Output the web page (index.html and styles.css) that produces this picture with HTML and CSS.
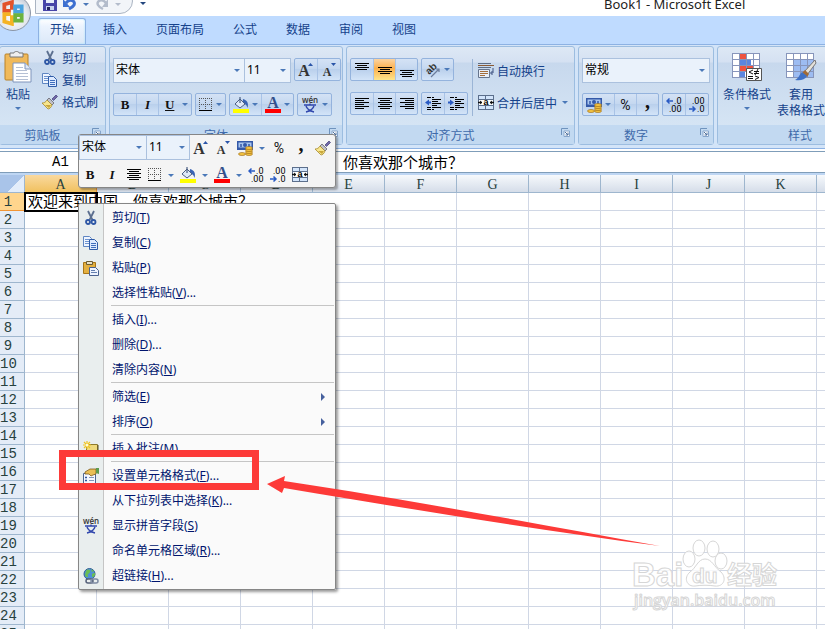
FILE: index.html
```
<!DOCTYPE html>
<html lang="zh-CN">
<head>
  <meta charset="UTF-8" />
  <meta name="viewport" content="width=device-width, initial-scale=1.0"/>
  <title>Book1 - Microsoft Excel</title>
  <link rel="stylesheet" href="styles.css">
</head>
<body>

  <!-- 图标库 -->
  <svg class="sprite" aria-hidden="true">
    <symbol id="cut" viewBox="0 0 16 16">
      <path d="M5 1l4.500 9M11 1L6.500 10" stroke="#5c6f8f" stroke-width="1.800" fill="none"/>
      <circle cx="5" cy="12" r="2" fill="none" stroke="#2e57a5" stroke-width="1.800"/>
      <circle cx="10.500" cy="12" r="2" fill="none" stroke="#2e57a5" stroke-width="1.800"/>
    </symbol>
    <symbol id="copy" viewBox="0 0 16 16">
      <path d="M.5 1.500h6l2 2v8h-8z" fill="#eef5ff" stroke="#5f86c2"/>
      <path d="M2 4.500h4M2 6.500h4M2 8.500h4" stroke="#6d93cf"/>
      <path d="M6.500 4.500h5l3 3v7h-8z" fill="#dceaff" stroke="#2f5ca8"/>
      <path d="M8 8.500h5M8 10.500h5M8 12.500h5" stroke="#3f6ebc"/>
    </symbol>
    <symbol id="paste" viewBox="0 0 16 16">
      <path d="M.5 2.500h12v11H.5z" fill="#e3b040" stroke="#a87516"/>
      <path d="M3.500 1.500h6v3h-6z" fill="#e9e2c8" stroke="#6a5b33"/>
      <path d="M6.500 7.500h6l3 3v5h-9z" fill="#eef4ff" stroke="#4a6290"/>
      <path d="M8 10.500h4M8 12.500h6" stroke="#6580b0"/>
    </symbol>
    <symbol id="brush" viewBox="0 0 16 16">
      <path d="M10 5l4-4 1.500 1.500-4 4z" fill="#7168a8" stroke="#4c4a80" stroke-width=".8"/>
      <path d="M7 4l5 5-2 2-5-5z" fill="#c0c0c8" stroke="#66666e" stroke-width=".8"/>
      <path d="M5 6l5 5c-1 3-3 4-4 4L0 9c2 0 4-1 5-3z" fill="#f7e68e" stroke="#a78a2d" stroke-width=".8"/>
      <path d="M3 11l4 3 2-3z" fill="#c9a63a"/>
    </symbol>
    <symbol id="coin" viewBox="0 0 16 16">
      <path d="M0 1h16v9H0z" fill="#3459a8"/>
      <path d="M1.500 2.500h13v5h-13z" fill="#a9c6ef"/>
      <circle cx="8" cy="5" r="2" fill="#3459a8"/>
      <path d="M4 4v3M12 4v3" stroke="#3459a8" stroke-width="1.500"/>
      <g fill="#f5c542" stroke="#946210" stroke-width=".6">
        <ellipse cx="5" cy="14" rx="3.500" ry="1.500"/>
        <ellipse cx="12" cy="14" rx="3.500" ry="1.500"/><ellipse cx="12" cy="12" rx="3.500" ry="1.500"/>
        <ellipse cx="12" cy="10" rx="3.500" ry="1.500"/><ellipse cx="12" cy="8" rx="3.500" ry="1.500"/>
      </g>
    </symbol>
    <symbol id="wen" viewBox="0 0 18 17">
      <text x="9" y="7" text-anchor="middle" font-family="Open Sans" font-size="8" font-weight="600" fill="#333">wén</text>
      <path d="M3 9h12M9 7.500V9M5 10c1 3 4 5 8 6M13 10c-1 3-4 5-8 6" stroke="#3147ad" stroke-width="1.400" fill="none"/>
    </symbol>
    <symbol id="borders" viewBox="0 0 14 14">
      <path d="M.5 0v12M6.500 0v12M12.500 0v12M0 .5h13M0 6.500h13" stroke="#555" stroke-dasharray="1 1"/>
      <path d="M0 12.500h13" stroke="#000"/>
    </symbol>
    <symbol id="fill" viewBox="0 0 16 16">
      <path d="M10 2c4 1 6 4 4.500 9-1-4-2.500-4-5-4z" fill="#3a64b4"/>
      <path d="M2 7l5-5 5 5-5 4z" fill="#dfe9f8" stroke="#4b5f83"/>
      <path d="M7 6V0" stroke="#4b5f83" stroke-width="1.200"/>
      <path d="M0 12h16v4H0z" fill="#ff0"/>
    </symbol>
    <symbol id="color" viewBox="0 0 16 16">
      <text x="8" y="11" text-anchor="middle" font-family="Liberation Serif" font-size="16" font-weight="700" fill="#34508c">A</text>
      <path d="M0 12h16v4H0z" fill="#f00"/>
    </symbol>
    <symbol id="grow" viewBox="0 0 16 16">
      <text x="6" y="14" text-anchor="middle" font-family="Liberation Serif" font-size="16" font-weight="700" fill="#333">A</text>
      <path d="M10 4l2.500-3L15 4z" fill="#2a55a8"/>
    </symbol>
    <symbol id="shrink" viewBox="0 0 16 16">
      <text x="6" y="14" text-anchor="middle" font-family="Liberation Serif" font-size="12" font-weight="700" fill="#333">A</text>
      <path d="M10 1l2.500 3L15 1z" fill="#2a55a8"/>
    </symbol>
    <symbol id="incdec" viewBox="0 0 16 16">
      <path d="M7 4H1M3.500 1.500L1 4l2.500 2.500" stroke="#2a5bc4" stroke-width="1.500" fill="none"/>
      <text x="15.500" y="7" text-anchor="end" font-family="Roboto" font-size="9">.0</text>
      <text x="15.500" y="15" text-anchor="end" font-family="Roboto" font-size="9">.00</text>
    </symbol>
    <symbol id="decdec" viewBox="0 0 16 16">
      <text x="15.500" y="7" text-anchor="end" font-family="Roboto" font-size="9">.00</text>
      <text x="15.500" y="15" text-anchor="end" font-family="Roboto" font-size="9">.0</text>
      <path d="M0 12h6M3.500 9.500L6 12l-2.500 2.500" stroke="#2a5bc4" stroke-width="1.500" fill="none"/>
    </symbol>
    <symbol id="merge" viewBox="0 0 16 16">
      <path d="M0 0h16v15H0z" fill="#5c6f8c"/>
      <path d="M1 1h6v3H1zM8 1h7v3H8zM1 11h6v3H1zM8 11h7v3H8z" fill="#d3e5fb"/>
      <path d="M1 5h14v5H1z" fill="#fff"/>
      <path d="M0 7.500h4M16 7.500h-4" stroke="#111" stroke-width="1.400"/>
      <path d="M2 5.500v4l2-2zM14 5.500v4l-2-2z" fill="#111"/>
      <text x="8" y="10" text-anchor="middle" font-family="Liberation Sans" font-size="9" font-weight="700">a</text>
    </symbol>
    <symbol id="wrap" viewBox="0 0 16 16">
      <path d="M0 .5h13M0 4.500h13" stroke="#5f6d84"/>
      <path d="M0 2.500h16" stroke="#8b5a33"/>
      <path d="M.5 6.500h11v8H.5z" fill="#e8eef8" stroke="#66748c"/>
      <path d="M2 8.500h8M2 10.500h8M2 12.500h5" stroke="#a36d3c"/>
      <path d="M15 5v5h-2M14.500 8L12.500 10l2 2" stroke="#3d5180" fill="none"/>
    </symbol>
    <symbol id="left" viewBox="0 0 14 14"><path d="M0 1.500h14M0 3.500h9M0 5.500h14M0 7.500h9M0 9.500h14M0 11.500h9" stroke="#000"/></symbol>
    <symbol id="center" viewBox="0 0 14 14"><path d="M0 1.500h14M2 3.500h10M0 5.500h14M2 7.500h10M0 9.500h14M2 11.500h10" stroke="#000"/></symbol>
    <symbol id="right" viewBox="0 0 14 14"><path d="M0 1.500h14M5 3.500h9M0 5.500h14M5 7.500h9M0 9.500h14M5 11.500h9" stroke="#000"/></symbol>
    <symbol id="vtop" viewBox="0 0 14 14"><path d="M0 .5h14M2 2.500h10M0 4.500h14M2 6.500h10" stroke="#000"/></symbol>
    <symbol id="vmid" viewBox="0 0 14 14"><path d="M0 4.500h14M2 6.500h10M0 8.500h14M2 10.500h10" stroke="#000"/></symbol>
    <symbol id="vbottom" viewBox="0 0 14 14"><path d="M0 7.500h14M2 9.500h10M0 11.500h14M2 13.500h10" stroke="#000"/></symbol>
    <symbol id="outdent" viewBox="0 0 16 14">
      <path d="M2 .5h4M7 .5h2M7 2.500h9M7 4.500h6M7 6.500h9M7 8.500h5M2 10.500h4M7 10.500h9M2 12.500h4M7 12.500h2" stroke="#000"/>
      <path d="M0 5.500l4-3v2h2v2H4v2z" fill="#2a5bc4"/>
    </symbol>
    <symbol id="indent" viewBox="0 0 16 14">
      <path d="M2 .5h4M7 .5h2M7 2.500h9M7 4.500h6M7 6.500h9M7 8.500h5M2 10.500h4M7 10.500h9M2 12.500h4M7 12.500h2" stroke="#000"/>
      <path d="M6 5.500l-4-3v2H0v2h2v2z" fill="#2a5bc4"/>
    </symbol>
    <symbol id="rotate" viewBox="0 0 16 16">
      <text x="3" y="12" transform="rotate(-45 5 11)" font-family="Liberation Sans" font-size="10" font-weight="700" fill="#333">ab</text>
      <path d="M6 15l8-8M11 7h3v3" stroke="#6b7c9b" stroke-width="1.200" fill="none"/>
    </symbol>
    <symbol id="launch" viewBox="0 0 9 9">
      <path d="M.5 7V.5H7" stroke="#6f93bd" fill="none"/>
      <path d="M3 3h5.500v5.500H3z" fill="#fff" stroke="#86a5cb"/>
      <path d="M4 4l3 3M7 4.500V7H4.500" stroke="#4d6f9c" fill="none"/>
    </symbol>
    <symbol id="comment" viewBox="0 0 16 16">
      <path d="M3.500 3.500h11v10h-11z" fill="#efd97c" stroke="#8e7a2c"/>
      <path d="M15 4v10H4" stroke="#5b4d1d" fill="none"/>
      <path d="M4 0v8M0 4h8M1 1l6 6M7 1L1 7" stroke="#f0c420" stroke-width="1.200"/>
      <circle cx="4" cy="4" r="1.500" fill="#fffbd8"/>
    </symbol>
    <symbol id="format" viewBox="0 0 16 16">
      <path d="M.5 5.500h12v10H.5z" fill="#f4f8ff" stroke="#4d6793"/>
      <path d="M2 9.500h2M2 12.500h2" stroke="#2f55a0" stroke-width="1.500"/>
      <path d="M6 9.500h5M6 12.500h5" stroke="#8397b8"/>
      <path d="M2 4l5-3h6v5l-3 1-2 1-2-2-4 0z" fill="#e9bf55" stroke="#7d5c1a" stroke-width=".8"/>
      <path d="M13 0h3v6l-3-1z" fill="#5d9c4f"/>
    </symbol>
    <symbol id="link" viewBox="0 0 16 16">
      <circle cx="6.500" cy="6" r="5.500" fill="#4f8fd6" stroke="#315f97"/>
      <path d="M3 3c2-3 5-1 4 1s-3 2-2 4-3 1-3-1zM9 6c2-2 4-1 3 1s-3 3-3 1zM8 1l3 2-2 1z" fill="#6bbf52"/>
      <rect x="3" y="11" width="7" height="4" rx="2" fill="#e9eeee" stroke="#55617a" stroke-width="1.500"/>
      <rect x="8" y="11" width="7" height="4" rx="2" fill="none" stroke="#7e8ba3" stroke-width="1.500"/>
    </symbol>
  </svg>

  <div class="app">
    <header class="titlebar">
      <div class="quick">
        <button aria-label="保存"><svg width="14" height="14" viewBox="0 0 14 14"><path d="M0 0h14v14H0z" fill="#4745a8"/><path d="M3 0h8v6H3z" fill="#e8eefb"/><path d="M3 9h8v4H3z" fill="#c7d2ee"/><path d="M4 10h3v3H4z" fill="#25255e"/></svg></button>
        <button aria-label="撤消"><svg width="14" height="14" viewBox="0 0 14 14"><path d="M3 6c4-5 10-2 8 2-1 2-3 3-5 4" stroke="#3d6fd0" stroke-width="3" fill="none"/><path d="M0 2v8h7z" fill="#3d6fd0"/></svg></button>
        <i class="caret"></i>
        <button aria-label="恢复"><svg width="14" height="14" viewBox="0 0 14 14"><path d="M11 6C7 1 1 4 3 8c1 2 3 3 5 4" stroke="#b3bccb" stroke-width="2.500" fill="none"/><path d="M13 2v8H7z" fill="#b3bccb"/></svg></button>
        <i class="caret dim"></i>
      </div>
      <i class="caret more"></i>
      <h1>Book1 - Microsoft Excel</h1>
      <button class="orb" aria-label="Office">
        <svg width="24" height="26" viewBox="0 0 22 24" fill="none" stroke-width="3.500">
          <path d="M10 9V2L3 4v6h6" stroke="#e2532a"/>
          <path d="M13 6h6v5h-6z" stroke="#4aa3df"/>
          <path d="M9 13H3v7l7 2v-8" stroke="#f5b324"/>
          <path d="M13 14h6v5h-6z" stroke="#6db33f"/>
        </svg>
      </button>
    </header>

    <nav class="tabs">
      <a class="active" href="#">开始</a>
      <a href="#">插入</a>
      <a href="#">页面布局</a>
      <a href="#">公式</a>
      <a href="#">数据</a>
      <a href="#">审阅</a>
      <a href="#">视图</a>
    </nav>

    <div class="ribbon">
      <!-- 剪贴板 -->
      <section class="group clipboard">
        <div class="group-body">
          <button class="big">
            <svg width="28" height="32" viewBox="0 0 28 32"><rect x="1" y="3" width="23" height="26" rx="1" fill="#f0b95a" stroke="#b98228"/><path d="M6 2h4c0-2 5-2 5 0h4v4H6z" fill="#eee" stroke="#777"/><path d="M9 12h12l6 6v13H9z" fill="#fff" stroke="#7f94bb"/><path d="M12 16.500h7M12 19.500h11M12 22.500h12M12 25.500h12M12 28.500h12" stroke="#b5c0d4"/><path d="M21 12v6h6" fill="#dfe7f4" stroke="#7f94bb"/></svg>
            <span>粘贴</span>
            <i class="caret"></i>
          </button>
          <div class="small-list">
            <button><svg width="16" height="16"><use href="#cut"/></svg>剪切</button>
            <button><svg width="16" height="16"><use href="#copy"/></svg>复制</button>
            <button><svg width="16" height="16"><use href="#brush"/></svg>格式刷</button>
          </div>
        </div>
        <h2>剪贴板<svg width="9" height="9"><use href="#launch"/></svg></h2>
      </section>

      <!-- 字体 -->
      <section class="group font">
        <div class="group-body rows">
          <div class="row">
            <div class="combos">
              <span class="combo name"><select aria-label="字体"><option>宋体</option></select></span>
              <span class="combo size"><select aria-label="字号"><option>11</option></select></span>
            </div>
            <div class="set">
              <button aria-label="增大字号"><svg width="16" height="16"><use href="#grow"/></svg></button>
              <button aria-label="减小字号"><svg width="16" height="16"><use href="#shrink"/></svg></button>
            </div>
          </div>
          <div class="row">
            <div class="set">
              <button class="letter">B</button>
              <button class="letter italic">I</button>
              <button class="letter under"><u>U</u><i class="caret"></i></button>
            </div>
            <div class="set"><button aria-label="边框"><svg width="14" height="14"><use href="#borders"/></svg><i class="caret"></i></button></div>
            <div class="set">
              <button aria-label="填充颜色"><svg width="16" height="16"><use href="#fill"/></svg><i class="caret"></i></button>
              <button aria-label="字体颜色"><svg width="16" height="16"><use href="#color"/></svg><i class="caret"></i></button>
            </div>
            <div class="set"><button aria-label="拼音"><svg width="18" height="17"><use href="#wen"/></svg><i class="caret"></i></button></div>
          </div>
        </div>
        <h2>字体<svg width="9" height="9"><use href="#launch"/></svg></h2>
      </section>

      <!-- 对齐方式 -->
      <section class="group align">
        <div class="group-body">
          <div class="rows">
            <div class="row">
              <div class="set">
                <button aria-label="顶端对齐"><svg width="14" height="14"><use href="#vtop"/></svg></button>
                <button class="on" aria-label="垂直居中"><svg width="14" height="14"><use href="#vmid"/></svg></button>
                <button aria-label="底端对齐"><svg width="14" height="14"><use href="#vbottom"/></svg></button>
              </div>
              <div class="set"><button aria-label="方向"><svg width="16" height="16"><use href="#rotate"/></svg><i class="caret"></i></button></div>
            </div>
            <div class="row">
              <div class="set">
                <button aria-label="左对齐"><svg width="14" height="14"><use href="#left"/></svg></button>
                <button aria-label="居中"><svg width="14" height="14"><use href="#center"/></svg></button>
                <button aria-label="右对齐"><svg width="14" height="14"><use href="#right"/></svg></button>
              </div>
              <div class="set">
                <button aria-label="减少缩进量"><svg width="16" height="14"><use href="#outdent"/></svg></button>
                <button aria-label="增加缩进量"><svg width="16" height="14"><use href="#indent"/></svg></button>
              </div>
            </div>
          </div>
          <div class="wide-list">
            <button><svg width="16" height="16"><use href="#wrap"/></svg>自动换行</button>
            <button><svg width="16" height="16"><use href="#merge"/></svg>合并后居中<i class="caret"></i></button>
          </div>
        </div>
        <h2>对齐方式<svg width="9" height="9"><use href="#launch"/></svg></h2>
      </section>

      <!-- 数字 -->
      <section class="group number">
        <div class="group-body rows">
          <div class="row">
            <span class="combo full"><select aria-label="数字格式"><option>常规</option></select></span>
          </div>
          <div class="row">
            <div class="set">
              <button aria-label="会计数字格式"><svg width="16" height="16"><use href="#coin"/></svg><i class="caret"></i></button>
              <button class="sign">%</button>
              <button class="letter comma">,</button>
            </div>
            <div class="set">
              <button aria-label="增加小数位数"><svg width="16" height="16"><use href="#incdec"/></svg></button>
              <button aria-label="减少小数位数"><svg width="16" height="16"><use href="#decdec"/></svg></button>
            </div>
          </div>
        </div>
        <h2>数字<svg width="9" height="9"><use href="#launch"/></svg></h2>
      </section>

      <!-- 样式 -->
      <section class="group styles">
        <div class="group-body">
          <button class="big">
            <svg width="32" height="32" viewBox="0 0 32 32"><path d="M1 2h28v25H1z" fill="#fff"/><path d="M8 2h7v6H8zM8 14h14v6H8z" fill="#ee5340"/><path d="M8 8h12v6H8zM8 20h6v7H8z" fill="#5b86e0"/><path d="M1.500 2v25M8.500 2v25M15.500 2v25M22.500 2v25M28.500 2v25M1 2.500h28M1 8.500h28M1 14.500h28M1 20.500h28M1 26.500h28" stroke="#8795bb" stroke-width="1"/><path d="M15.500 17.500h15v12h-15z" fill="#fff" stroke="#555"/><path d="M22 19l-4 2 4 2M17 25.500h5M17 27.500h5M23 20.500h5M23 22.500h5M27 18l-3 6M24 25l4 1.500-4 2" stroke="#111" fill="none"/></svg>
            <span>条件格式</span>
            <i class="caret"></i>
          </button>
          <button class="big">
            <svg width="32" height="32" viewBox="0 0 32 32"><path d="M1 2h28v25H1z" fill="#fff"/><path d="M8 8h21v19H8z" fill="#9dbcf2"/><path d="M1.500 2v25M8.500 2v25M15.500 2v25M22.500 2v25M28.500 2v25M1 2.500h28M1 8.500h28M1 14.500h28M1 20.500h28M1 26.500h28" stroke="#8795bb"/><path d="M30 9L19 21l3 3 9-12z" fill="#e4e1da" stroke="#777"/><path d="M20 19l4 4-2 3-5-4z" fill="#a36b35"/><path d="M17 21l5 4c-2 4-7 5-12 4 4-2 4-5 7-8z" fill="#3f71c6"/></svg>
            <span>套用<br>表格格式</span>
          </button>
        </div>
        <h2>样式</h2>
      </section>
    </div>

    <div class="formula-bar">
      <input class="name-box" aria-label="名称框" value="A1">
      <input class="formula" aria-label="编辑栏" value="欢迎来到中国。你喜欢那个城市？">
    </div>

    <main class="sheet">
      <table id="grid"></table>
    </main>

    <!-- 浮动工具栏 -->
    <div class="mini">
      <div class="mini-row">
        <span class="combo mini-name"><select aria-label="字体"><option>宋体</option></select></span>
        <span class="combo mini-size"><select aria-label="字号"><option>11</option></select></span>
        <button aria-label="增大字号"><svg width="16" height="16"><use href="#grow"/></svg></button>
        <button aria-label="减小字号"><svg width="16" height="16"><use href="#shrink"/></svg></button>
        <button aria-label="会计数字格式"><svg width="16" height="16"><use href="#coin"/></svg><i class="caret"></i></button>
        <button class="sign">%</button>
        <button class="letter comma">,</button>
        <button aria-label="格式刷"><svg width="16" height="16"><use href="#brush"/></svg></button>
      </div>
      <div class="mini-row">
        <button class="letter">B</button>
        <button class="letter italic">I</button>
        <button aria-label="居中"><svg width="14" height="14"><use href="#center"/></svg></button>
        <button aria-label="边框"><svg width="14" height="14"><use href="#borders"/></svg><i class="caret"></i></button>
        <button aria-label="填充颜色"><svg width="16" height="16"><use href="#fill"/></svg><i class="caret"></i></button>
        <button aria-label="字体颜色"><svg width="16" height="16"><use href="#color"/></svg><i class="caret"></i></button>
        <button aria-label="增加小数位数"><svg width="16" height="16"><use href="#incdec"/></svg></button>
        <button aria-label="减少小数位数"><svg width="16" height="16"><use href="#decdec"/></svg></button>
        <button aria-label="合并后居中"><svg width="16" height="16"><use href="#merge"/></svg></button>
      </div>
    </div>

    <!-- 右键菜单 -->
    <div class="menu">
      <button><svg width="16" height="16"><use href="#cut"/></svg><span>剪切(<u>T</u>)</span></button>
      <button><svg width="16" height="16"><use href="#copy"/></svg><span>复制(<u>C</u>)</span></button>
      <button><svg width="16" height="16"><use href="#paste"/></svg><span>粘贴(<u>P</u>)</span></button>
      <button><span>选择性粘贴(<u>V</u>)...</span></button>
      <hr>
      <button><span>插入(<u>I</u>)...</span></button>
      <button><span>删除(<u>D</u>)...</span></button>
      <button><span>清除内容(<u>N</u>)</span></button>
      <hr>
      <button class="sub"><span>筛选(<u>E</u>)</span></button>
      <button class="sub"><span>排序(<u>O</u>)</span></button>
      <hr>
      <button><svg width="16" height="16"><use href="#comment"/></svg><span>插入批注(<u>M</u>)</span></button>
      <hr>
      <button><svg width="16" height="16"><use href="#format"/></svg><span>设置单元格格式(<u>F</u>)...</span></button>
      <button><span>从下拉列表中选择(<u>K</u>)...</span></button>
      <button><svg width="18" height="17"><use href="#wen"/></svg><span>显示拼音字段(<u>S</u>)</span></button>
      <button><span>命名单元格区域(<u>R</u>)...</span></button>
      <button><svg width="16" height="16"><use href="#link"/></svg><span>超链接(<u>H</u>)...</span></button>
    </div>

    <!-- 标注 -->
    <div class="mark"></div>
    <svg class="arrow" width="394" height="72" viewBox="0 0 394 72">
      <path d="M0 8L18 0l-1 5C150 25 270 48 393 70 270 54 150 34 17 12l-2 5z" fill="#fd3a38"/>
    </svg>

    <svg class="watermark" width="152" height="76" viewBox="0 0 152 76">
      <g fill="#fff" fill-opacity=".8" stroke="#d6d6d6">
        <ellipse cx="68" cy="11" rx="6" ry="8"/>
        <ellipse cx="82" cy="12" rx="6" ry="8"/>
        <ellipse cx="58" cy="22" rx="6" ry="8"/>
        <ellipse cx="90" cy="24" rx="6" ry="8"/>
        <path d="M74 22c-7 0-9 9-15 13-7 6-3 15 5 14 6-1 14-1 20 0 9 1 12-8 6-14-7-5-9-13-16-13z"/>
        <g font-family="Liberation Sans" font-weight="700">
          <text x="1" y="49" font-size="33">Bai</text>
          <text x="61" y="46" font-size="21">du</text>
          <text x="3" y="69" font-size="16" font-family="Open Sans" font-weight="600">jingyan.baidu.com</text>
        </g>
        <text x="96" y="47" font-size="25" font-family="Noto Sans CJK SC" font-weight="700">经验</text>
      </g>
    </svg>
  </div>

  <script>
    const cols = 'ABCDEFGHIJKLMNOPQRSTUVWXYZ'.split('');
    const rows = 60;
    let html = '<tr><th class="corner"></th>';
    cols.forEach(c => {
      html += `<th class="${c === 'A' ? 'picked' : ''}">${c}</th>`;
    });
    html += '</tr>';
    for (let r = 1; r <= rows; r++) {
      html += `<tr><th class="${r === 1 ? 'picked' : ''}">${r}</th>`;
      cols.forEach(c => {
        if (r === 1 && c === 'A') {
          html += '<td class="current">欢迎来到中国。你喜欢那个城市？</td>';
        } else {
          html += r === 1 && 'BCD'.includes(c) ? '<td class="spill"></td>' : '<td></td>';
        }
      });
      html += '</tr>';
    }
    document.getElementById('grid').innerHTML = html;
  </script>

</body>
</html>
```
FILE: styles.css
```
* {
  box-sizing: border-box;
}
body {
  margin: 0;
  font-family: "Noto Sans", "Noto Sans CJK SC", sans-serif;
  font-size: 12px;
  color: #15428b;
  background: #fff;
}
button, select, input {
  font: inherit;
  color: inherit;
  border: none;
  margin: 0;
  padding: 0;
  background: none;
}
h1, h2 {
  margin: 0;
  font-weight: normal;
}
svg {
  flex: none;
}
.sprite {
  display: none;
}
.app {
  position: relative;
  display: flex;
  flex-direction: column;
  height: 100vh;
  overflow: hidden;
}
.caret {
  flex: none;
  border: 3px solid transparent;
  border-top-color: #4a78b8;
  border-bottom: none;
}
.caret.dim {
  border-top-color: #b3bccb;
}

/* 标题栏 */
.titlebar {
  position: relative;
  z-index: 2;
  display: flex;
  height: 16px;
  flex: none;
}
.quick {
  display: flex;
  align-items: center;
  gap: 6px;
  width: 98px;
  height: 26px;
  margin: -12px 0 0 35px;
  padding: 6px 0 0 7px;
  border: 1px solid #aab4c2;
  border-radius: 0 13px 13px 0;
  background: #f2f5f9;
}
.quick button {
  display: flex;
}
.more {
  margin: 2px 0 0 7px;
  height: 3px;
  border-top-color: #23467e;
}
.titlebar h1 {
  flex: 1;
  margin-top: -6px;
  padding-left: 458px;
  font-size: 13px;
  line-height: 20px;
  color: #222;
  white-space: nowrap;
}
.orb {
  position: absolute;
  left: -5px;
  top: -5px;
  display: flex;
  align-items: center;
  justify-content: center;
  width: 36px;
  height: 36px;
  border: 1px solid #8b95a5;
  border-radius: 50%;
  background: radial-gradient(circle at 50% 60%, #fff, #e3e7ee 55%, #a4afbf);
}

/* 选项卡 */
.tabs {
  display: flex;
  gap: 5px;
  flex: none;
  height: 28px;
  padding: 2px 0 0 38px;
  background: #bfdbff;
}
.tabs a {
  padding: 0 12px;
  line-height: 24px;
  color: #15428b;
  text-decoration: none;
  white-space: nowrap;
}
.tabs .active {
  border: 1px solid #8db2e3;
  border-bottom: none;
  border-radius: 3px 3px 0 0;
  padding: 0 11px;
  line-height: 22px;
  background: linear-gradient(#fff, #ebf3fe 30%, #dbe8f8);
  box-shadow: inset 0 0 2px #9be0ff;
}

/* 功能区 */
.ribbon {
  display: flex;
  gap: 3px;
  flex: none;
  height: 105px;
  padding: 1px 0 3px;
  border-top: 1px solid #8db2e3;
  border-bottom: 1px solid #8db2e3;
  background: #d3e4f8;
  overflow: hidden;
}
.group {
  display: flex;
  flex-direction: column;
  flex: none;
  border: 1px solid #9cbde0;
  border-radius: 3px;
  background: linear-gradient(#dde8f5, #d5e1f2 15px, #c7d8ed 16px, #d9e8f6);
}
.group h2 {
  display: flex;
  align-items: center;
  justify-content: center;
  position: relative;
  height: 19px;
  padding-right: 20px;
  font-size: 12px;
  color: #3e6aaa;
  background: #c2d9f1;
}
.group h2 svg {
  position: absolute;
  right: 4px;
  top: 3px;
}
.group-body {
  display: flex;
  flex: 1;
}
.clipboard {
  width: 107px;
  margin-left: -1px;
}
.font {
  width: 234px;
}
.align {
  width: 229px;
}
.number {
  width: 136px;
}
.styles {
  width: 166px;
}
.styles h2 {
  padding-right: 0;
}
.big {
  display: flex;
  flex-direction: column;
  align-items: center;
  width: 36px;
  padding-top: 4px;
  line-height: 16px;
  white-space: nowrap;
}
.big span {
  padding: 4px 0;
}
.styles .group-body {
  padding-left: 2px;
}
.styles .big {
  width: 54px;
}
.small-list {
  display: flex;
  flex-direction: column;
  padding-left: 6px;
}
.small-list button {
  display: flex;
  align-items: center;
  gap: 4px;
  height: 22px;
}
.rows {
  display: flex;
  flex-direction: column;
  gap: 10px;
  padding: 11px 0 0 3px;
}
.row {
  display: flex;
  align-items: flex-start;
  gap: 3px;
  height: 25px;
}
.combos {
  display: flex;
}
.combo {
  position: relative;
  height: 25px;
  border: 1px solid #abc1de;
  background: #eaf2fb;
  color: #000;
}
.combo select {
  display: block;
  width: 100%;
  height: 100%;
  padding: 0 0 2px 2px;
  appearance: none;
  outline: none;
}
.combo::after {
  content: '';
  position: absolute;
  right: 4px;
  top: 10px;
  border: 3px solid transparent;
  border-top-color: #4a78b8;
  border-bottom: none;
  pointer-events: none;
}
.name {
  width: 132px;
}
.size {
  width: 47px;
  margin-left: -1px;
}
.full {
  width: 128px;
}
.set {
  display: flex;
  height: 23px;
  border: 1px solid #94b3dd;
  border-radius: 2px;
  background: linear-gradient(#d4e2f5, #c5d8f0 45%, #bad0ec 50%, #d3e4f8);
}
.set button {
  display: flex;
  align-items: center;
  justify-content: center;
  gap: 3px;
  min-width: 22px;
  padding: 0 3px;
}
.set button + button {
  border-left: 1px solid #a9c3e6;
}
.set .on {
  background: linear-gradient(#fbd3a1, #fbb04d 45%, #fee58c);
}
.set .letter, .mini .letter {
  font-family: "Liberation Serif", serif;
  font-size: 13px;
  font-weight: bold;
  color: #111;
}
.set .italic, .mini .italic {
  font-style: italic;
}
.set .under {
  gap: 8px;
  padding-left: 6px;
}
.set .comma, .mini .comma {
  padding-bottom: 8px;
  font-size: 20px;
  line-height: 12px;
}
.sign {
  font-family: Roboto, sans-serif;
  font-size: 14px;
  color: #111;
}
.align .rows {
  gap: 9px;
}
.wide-list {
  display: flex;
  flex-direction: column;
  gap: 9px;
  height: 57px;
  margin: 12px 0 0 4px;
  padding-left: 5px;
  border-left: 1px solid #9bb5d6;
}
.wide-list button {
  display: flex;
  align-items: center;
  gap: 3px;
  height: 23px;
  white-space: nowrap;
}
.wide-list .caret {
  margin-left: 2px;
}

/* 编辑栏 */
.formula-bar {
  display: flex;
  flex: none;
  gap: 113px;
  margin-top: 2px;
  height: 22px;
  border-top: 1px solid #7f9db9;
  border-bottom: 1px solid #7f9db9;
  font-family: "Liberation Mono", "Noto Sans CJK SC", monospace;
  color: #000;
}
.name-box {
  width: 121px;
  text-align: center;
  font-size: 14px;
}
.formula {
  flex: 1;
  padding-left: 4px;
  font-size: 15px;
}

/* 工作表 */
.sheet {
  flex: 1;
  min-height: 0;
  overflow: hidden;
  border-top: 2px solid #bed6f3;
  font-family: "Liberation Mono", "Noto Sans CJK SC", monospace;
}
.sheet table {
  table-layout: fixed;
  width: 1897px;
  border-collapse: separate;
  border-spacing: 0;
}
.sheet tr {
  height: 18px;
}
.sheet th {
  width: 72px;
  height: 18px;
  padding: 2px 0 0;
  border-right: 1px solid #9eb6ce;
  border-bottom: 1px solid #9eb6ce;
  font-weight: normal;
  font-size: 14px;
  line-height: 15px;
  color: #27413e;
  background: #e4ecf7;
}
.sheet tr:first-child th {
  font-family: "Liberation Serif", serif;
  background: linear-gradient(#f6f9fc, #d5dde9);
}
.sheet th:first-child {
  width: 25px;
  padding-right: 8px;
}
.sheet tr th.picked {
  border-color: #f29536;
  background: #ffd58d;
}
.sheet tr:first-child th.picked {
  background: linear-gradient(#f9d99f, #f1c15f);
}
.sheet tr:first-child .corner {
  background: linear-gradient(135deg, #a9c4e9 60%, #e3edfa 60%);
}
.sheet td {
  height: 18px;
  padding: 0;
  border-right: 1px solid #d0d7e5;
  border-bottom: 1px solid #d0d7e5;
}
.sheet .spill {
  border-right-color: transparent;
}
.sheet .current {
  padding: 3px 0 0 3px;
  border: none;
  outline: 2px solid #000;
  outline-offset: -1px;
  font-size: 15px;
  line-height: 15px;
  color: #000;
  white-space: nowrap;
}

/* 浮动工具栏 */
.mini {
  position: absolute;
  left: 78px;
  top: 134px;
  width: 258px;
  height: 54px;
  border: 1px solid #868686;
  border-radius: 3px;
  background: #f4f4f4;
  box-shadow: 2px 2px 2px rgba(0,0,0,0.3);
}
.mini-row {
  display: flex;
  height: 26px;
}
.mini button {
  display: flex;
  align-items: center;
  justify-content: center;
  gap: 6px;
  min-width: 22px;
  padding: 0 3px;
}
.mini-row:last-child button {
  padding-top: 2px;
}
.mini-name {
  width: 68px;
}
.mini-size {
  width: 44px;
  margin-left: -1px;
}

/* 右键菜单 */
.menu {
  position: absolute;
  left: 78px;
  top: 203px;
  width: 258px;
  padding: 1px;
  border: 1px solid #868686;
  border-radius: 2px;
  background: linear-gradient(90deg, #e9eeee 24px, #c5c5c5 24px, #c5c5c5 25px, #fafafa 25px);
  box-shadow: 2px 2px 3px rgba(0,0,0,0.4);
  color: #00156e;
}
.menu button {
  display: grid;
  grid-template-columns: 22px 1fr;
  align-items: center;
  width: 100%;
  height: 25px;
  text-align: left;
}
.menu button svg {
  justify-self: center;
}
.menu span {
  grid-column: 2;
  padding: 0 0 2px 10px;
}
.menu hr {
  height: 1px;
  margin: 0 0 1px 31px;
  border: none;
  background: #c5c5c5;
}
.menu .sub {
  grid-template-columns: 22px 1fr 13px;
}
.menu .sub::after {
  content: '';
  border: 4px solid transparent;
  border-left-color: #47619e;
  border-right: none;
  width: 4px;
}

/* 标注和水印 */
.mark {
  position: absolute;
  left: 59px;
  top: 450px;
  width: 200px;
  height: 40px;
  border: 7px solid #fd3a38;
}
.arrow {
  position: absolute;
  left: 267px;
  top: 476px;
}
.watermark {
  position: absolute;
  left: 631px;
  top: 537px;
}
```
